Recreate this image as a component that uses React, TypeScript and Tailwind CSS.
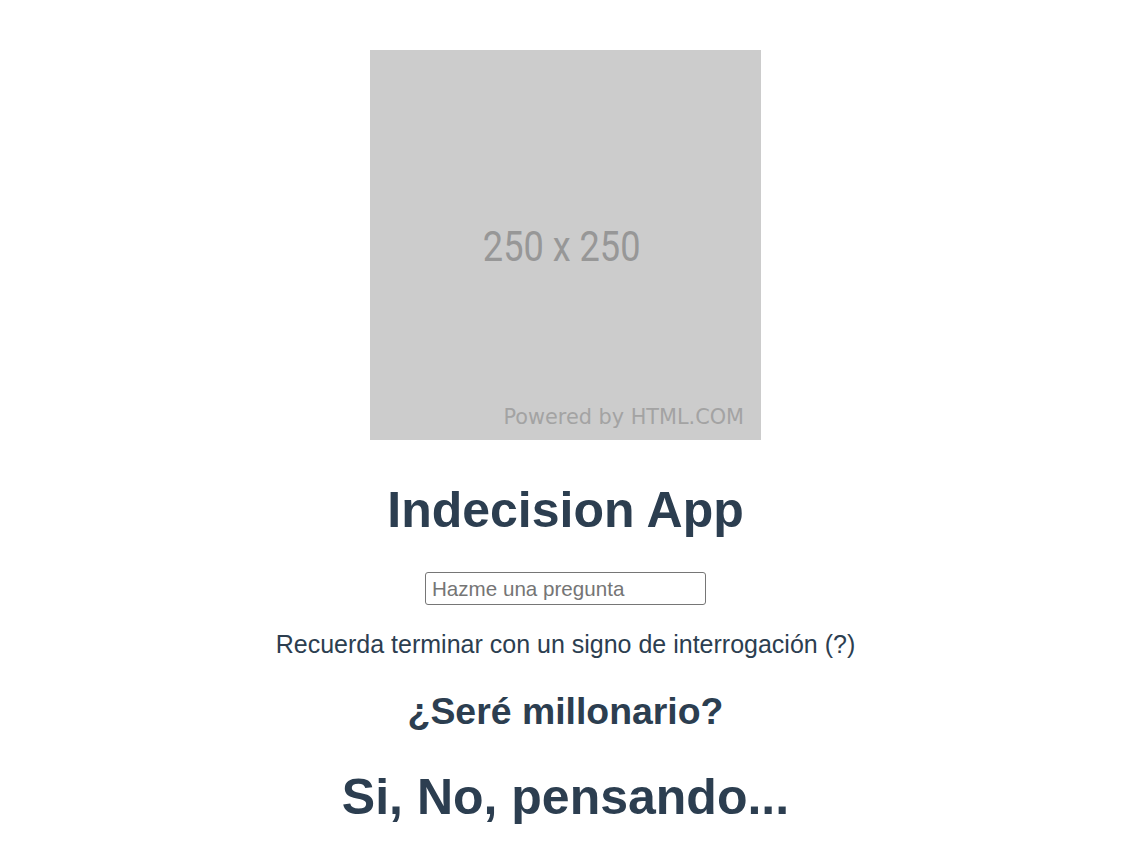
export default function App() {
  return (
    <div
      className="flex min-h-screen flex-col items-center bg-white pr-[13px] pt-[50px] text-center text-[#2c3e50]"
      style={{ fontFamily: '"Liberation Sans", Arial, sans-serif' }}
    >
      {/* Imagen de relleno 250 x 250 (escalada) */}
      <div className="relative flex h-[390px] w-[391px] flex-none items-center justify-center bg-[#cccccc]">
        <span className="mr-[8px] mt-[4px] scale-x-[0.86] font-['Roboto',sans-serif] text-[42px] leading-none text-[#979797]">
          250 x 250
        </span>
        <span className="absolute bottom-[12px] right-[17px] font-['DejaVu_Sans',sans-serif] text-[20.8px] leading-none text-[#a3a3a3]">
          Powered by HTML.COM
        </span>
      </div>

      <h1 className="mt-[42px] text-[50px] font-bold leading-[56px]">Indecision App</h1>

      <input
        type="text"
        placeholder="Hazme una pregunta"
        className="mt-[34px] h-[33px] w-[281px] rounded-[3px] border border-[#767676] px-[6px] text-[20.6px] text-[#2c3e50] placeholder:text-[#757575]"
      />

      <p className="mt-[25px] text-[25px] leading-[29px]">
        Recuerda terminar con un signo de interrogación (?)
      </p>

      <h2 className="mt-[31px] text-[37.4px] font-bold leading-[43px]">¿Seré millonario?</h2>

      <h1 className="mt-[36px] text-[50px] font-bold leading-[56px]">Si, No, pensando...</h1>
    </div>
  );
}
